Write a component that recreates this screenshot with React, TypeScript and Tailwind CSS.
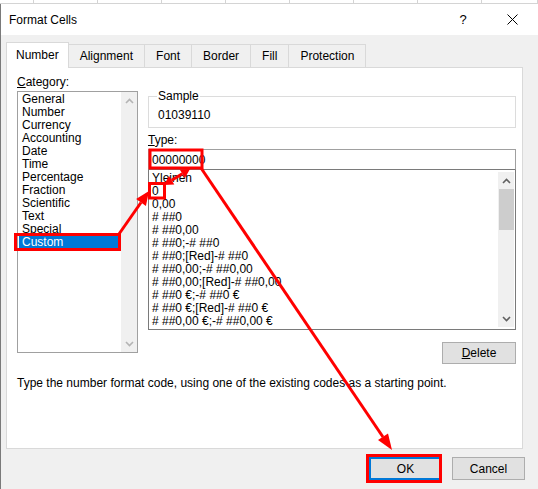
import { ReactNode } from 'react';

const font = { fontFamily: '"Liberation Sans", Arial, sans-serif' };

const categories = [
  'General',
  'Number',
  'Currency',
  'Accounting',
  'Date',
  'Time',
  'Percentage',
  'Fraction',
  'Scientific',
  'Text',
  'Special',
  'Custom',
];

const formats = [
  'Yleinen',
  '0',
  '0,00',
  '# ##0',
  '# ##0,00',
  '# ##0;-# ##0',
  '# ##0;[Red]-# ##0',
  '# ##0,00;-# ##0,00',
  '# ##0,00;[Red]-# ##0,00',
  '# ##0 €;-# ##0 €',
  '# ##0 €;[Red]-# ##0 €',
  '# ##0,00 €;-# ##0,00 €',
];

const tabs = ['Number', 'Alignment', 'Font', 'Border', 'Fill', 'Protection'];

function Chevron({ up, dark }: { up?: boolean; dark?: boolean }) {
  return (
    <svg width="9" height="6" viewBox="0 0 9 6">
      <path
        d={up ? 'M1 5 L4.5 1.5 L8 5' : 'M1 1 L4.5 4.5 L8 1'}
        fill="none"
        stroke={dark ? '#606060' : '#b4b4b4'}
        strokeWidth="1.6"
      />
    </svg>
  );
}

function Scrollbar({ dark, thumb }: { dark?: boolean; thumb?: boolean }) {
  return (
    <div className="flex w-[16px] shrink-0 flex-col items-center bg-[#f0f0f0]">
      <div className="flex h-[17px] items-center justify-center">
        <Chevron up dark={dark} />
      </div>
      {thumb && <div className="h-[41px] w-[15px] bg-[#cdcdcd]" />}
      <div className="flex-1" />
      <div className="flex h-[17px] items-center justify-center">
        <Chevron dark={dark} />
      </div>
    </div>
  );
}

function Button({ children, primary }: { children: ReactNode; primary?: boolean }) {
  return (
    <div
      className={
        'flex h-[23px] w-[73px] items-center justify-center bg-[#e1e1e1] text-[12px] ' +
        (primary ? 'border-2 border-[#0078d7]' : 'border border-[#adadad]')
      }
    >
      {children}
    </div>
  );
}

function Annotations() {
  return (
    <svg className="pointer-events-none absolute left-0 top-0" width="538" height="489">
      <g fill="none" stroke="#ff0000" strokeWidth="3">
        <rect x="15.5" y="234.5" width="104" height="15" />
        <rect x="150" y="150" width="52" height="18" />
        <rect x="149.5" y="183.5" width="15" height="14.5" />
        <rect x="367.5" y="455.5" width="73" height="26" />
      </g>
      <g stroke="#ff0000" strokeWidth="3" fill="#ff0000">
        <line x1="119" y1="234" x2="141" y2="202.5" />
        <polygon points="149,191 145.9,205.9 136.1,199.1" stroke="none" />
        <line x1="171.7" y1="180.3" x2="182.3" y2="173.7" />
        <polygon points="190,169 184.9,178 179.7,169.5" stroke="none" />
        <polygon points="164,185 174.3,184.6 169,176" stroke="none" />
        <line x1="201" y1="168" x2="383" y2="437" />
        <polygon points="392,450 378,440.1 388,433.4" stroke="none" />
      </g>
    </svg>
  );
}

export default function App() {
  const cols = [34, 64, 64, 64, 64, 64, 64, 64, 56];
  return (
    <div className="relative h-[489px] w-[538px] overflow-hidden bg-[#f0f0f0] text-black" style={font}>
      {/* spreadsheet behind the dialog */}
      <div className="flex h-[4px] border-b border-[#d4d4d4] bg-white">
        {cols.map((w, i) => (
          <div key={i} className="h-full border-r border-[#d4d4d4]" style={{ width: w }} />
        ))}
      </div>

      <div className="flex h-[485px]">
        <div className="w-[2px] bg-[#e6e6e6]" />
        <div className="flex flex-1 flex-col border-l border-[#7a7a7a]">
          {/* title bar */}
          <div className="flex h-[31px] items-center bg-white pl-[8px] text-[12px]">
            <span>Format Cells</span>
            <span className="ml-auto w-[12px] text-center text-[13px]">?</span>
            <span className="ml-[37px] mr-[24px] flex w-[12px] justify-center">
              <svg width="11" height="11" viewBox="0 0 11 11">
                <path d="M0.5 0.5 L10.5 10.5 M10.5 0.5 L0.5 10.5" stroke="#000" strokeWidth="1" />
              </svg>
            </span>
          </div>

          {/* body */}
          <div className="flex flex-1 flex-col px-[5px] pt-[6px]">
            <div className="flex h-[26px] items-end text-[12px]">
              {tabs.map((t, i) =>
                i === 0 ? (
                  <div
                    key={t}
                    className="relative z-10 -mb-px flex h-[26px] items-center border border-b-0 border-[#d9d9d9] bg-white px-[9px] pb-[2px]"
                  >
                    {t}
                  </div>
                ) : (
                  <div
                    key={t}
                    className="-ml-px flex h-[23px] items-center border border-b-0 border-[#d9d9d9] bg-[#f0f0f0] px-[11px]"
                  >
                    {t}
                  </div>
                ),
              )}
            </div>

            {/* tab panel */}
            <div className="mr-[14px] flex h-[382px] flex-col border border-[#d9d9d9] bg-white pl-[10px] pr-[6px] pt-[6px] text-[12px]">
              <div className="flex">
                <div className="w-[121px]">
                  <div className="h-[17px] leading-[17px]">
                    <span className="underline">C</span>ategory:
                  </div>
                  <div className="flex h-[262px] border border-[#a0a0a0] bg-white">
                    <div className="flex-1 pl-[1px] pt-[1px]">
                      {categories.map((c) => (
                        <div
                          key={c}
                          className={
                            'h-[13px] pl-[3px] leading-[13px] ' +
                            (c === 'Custom' ? 'bg-[#0078d7] text-white' : '')
                          }
                        >
                          {c}
                        </div>
                      ))}
                    </div>
                    <Scrollbar />
                  </div>
                </div>

                <div className="ml-[10px] mt-[16px] w-[368px]">
                  <fieldset className="h-[38px] border border-[#dcdcdc] px-[8px]">
                    <legend className="px-[1px] leading-[13px]">Sample</legend>
                    <div className="mt-[5px] pl-[1px] leading-[14px]">01039110</div>
                  </fieldset>

                  <div className="mt-[5px] h-[15px] leading-[15px]">
                    <span className="underline">T</span>ype:
                  </div>
                  <div className="mt-[1px] flex h-[21px] items-center border border-[#a0a0a0] border-b-[#7a7a7a] pl-[3px]">
                    00000000
                  </div>
                  <div className="flex h-[160px] border border-t-0 border-[#7a7a7a]">
                    <div className="flex-1 overflow-hidden pl-[3px] pt-[2px]">
                      {formats.map((f) => (
                        <div key={f} className="h-[13px] leading-[13px] whitespace-nowrap">
                          {f}
                        </div>
                      ))}
                    </div>
                    <div className="flex py-[2px] pr-[1px]">
                      <Scrollbar dark thumb />
                    </div>
                  </div>
                  <div className="mt-[12px] flex justify-end">
                    <div className="flex h-[22px] w-[74px] items-center justify-center border border-[#adadad] bg-[#e1e1e1]">
                      <span className="underline">D</span>elete
                    </div>
                  </div>
                </div>
              </div>
              <div className="mt-[12px] leading-[15px]">
                Type the number format code, using one of the existing codes as a starting point.
              </div>
            </div>

            {/* footer buttons */}
            <div className="mr-[12px] mt-[8px] flex justify-end gap-[10px]">
              <Button primary>OK</Button>
              <Button>Cancel</Button>
            </div>
          </div>
        </div>
      </div>

      <Annotations />
    </div>
  );
}
